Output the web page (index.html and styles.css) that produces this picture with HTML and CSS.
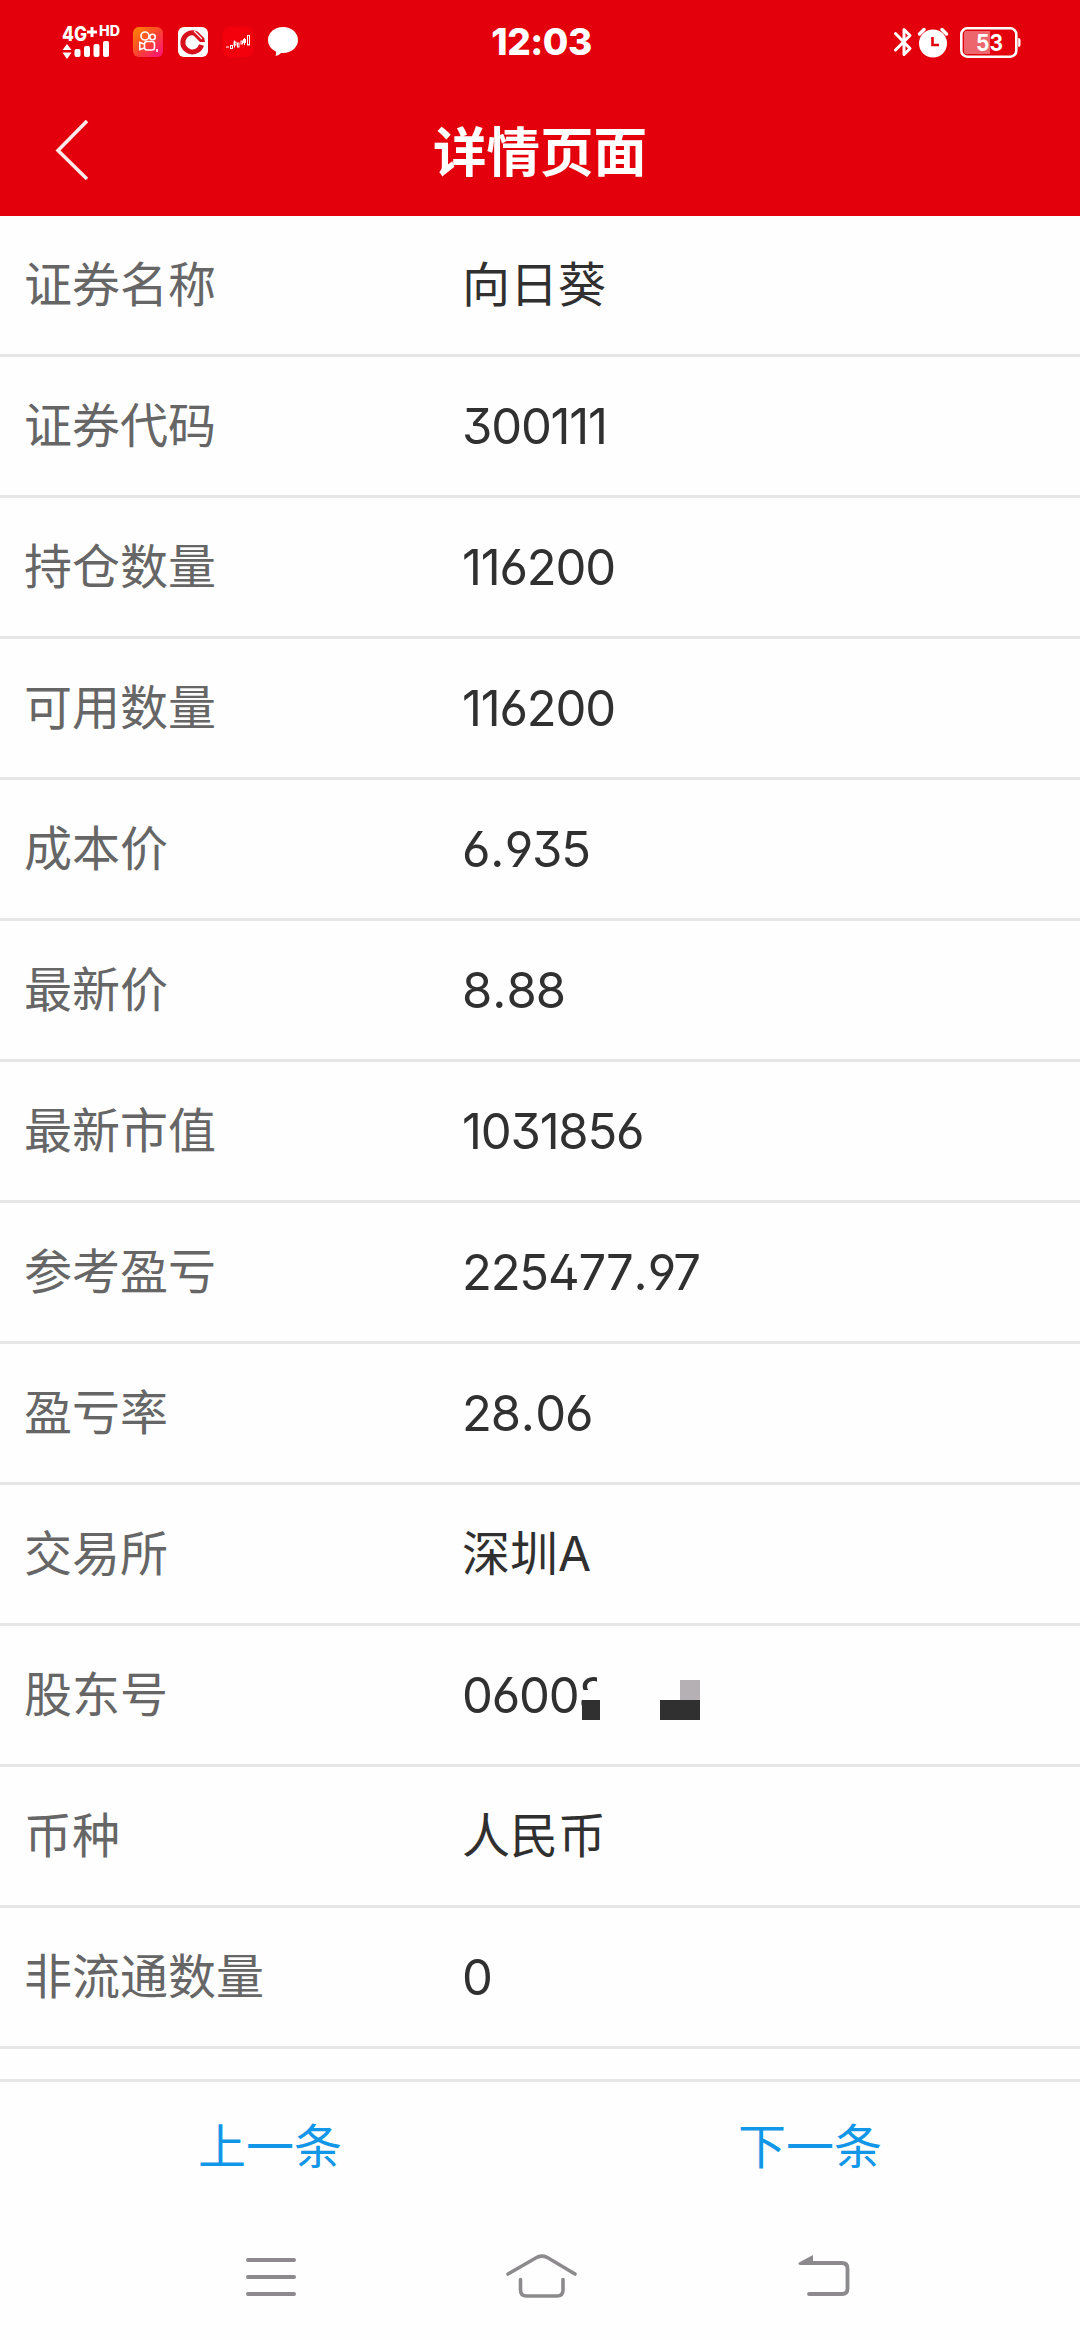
FILE: index.html
```html
<!DOCTYPE html>
<html lang="zh-CN">
<head>
<meta charset="utf-8">
<title>详情页面</title>
<link rel="stylesheet" href="styles.css">
</head>
<body>
<div class="screen">
  <header class="header">
    <div class="status">
      <div class="status-left">
        <svg class="signal" width="60" height="44" viewBox="0 -4 60 44">
          <g fill="#fff">
            <text class="net" x="0" y="17" textLength="25" lengthAdjust="spacingAndGlyphs">4G</text>
            <path d="M30 3v10M25 8h10" stroke="#fff" stroke-width="3"/>
            <text class="hd" x="37" y="12" textLength="21" lengthAdjust="spacingAndGlyphs">HD</text>
            <path d="M.5 26 5 20l4.500 6zM.5 28.500h9L5 35z"/>
            <rect x="12.500" y="25" width="6" height="8" rx="2"/>
            <rect x="22" y="22" width="6" height="11" rx="2"/>
            <rect x="31.500" y="20" width="6" height="13" rx="2"/>
            <rect x="41" y="17" width="6" height="16" rx="2"/>
          </g>
        </svg>
        <svg width="30" height="30" viewBox="0 0 30 30">
          <defs><linearGradient id="warm" x1="0" y1="0" x2="1" y2="1"><stop offset="0" stop-color="#ff8a00"/><stop offset=".5" stop-color="#ff4530"/><stop offset="1" stop-color="#ff1080"/></linearGradient></defs>
          <rect width="30" height="30" rx="6" fill="url(#warm)"/>
          <g fill="none" stroke="#fff" stroke-width="1.600"><circle cx="12" cy="9" r="4"/><circle cx="19.500" cy="10" r="2.800"/><rect x="11.500" y="14.500" width="10" height="8.500" rx="2.500"/><path d="M11 17l-4.200-1.500v7L11 21"/><path d="M24 22v3"/></g>
        </svg>
        <svg width="30" height="30" viewBox="0 0 30 30">
          <rect width="30" height="30" rx="6" fill="#fff"/>
          <path d="M16 6A9.500 9.500 0 1 0 23.500 18" fill="none" stroke="#d8101c" stroke-width="5"/>
          <path d="M16 3.500A12 12 0 0 1 27 15H22L14.500 7.500z" fill="#d8101c"/>
          <path d="M16 4l8 8M19 3l7 7" stroke="#fff" stroke-width="1.100"/>
          <path d="M15 9l6.200 6.200-6.200 6.200-6.200-6.200z" fill="#fff"/>
        </svg>
        <svg width="30" height="30" viewBox="0 0 30 30">
          <rect width="30" height="30" rx="6" fill="#f4000c"/>
          <g fill="none" stroke="#fff" stroke-width="1"><path d="M3 20h3M11.500 13.500v7M21.500 11v7"/><rect x="7.500" y="18.500" width="2" height="3"/><rect x="11" y="15" width="2" height="3"/><rect x="14.500" y="16" width="1.500" height="4"/><rect x="18" y="14" width="1.500" height="3"/><rect x="20.500" y="12.500" width="2" height="3"/><rect x="24.500" y="8.500" width="2" height="9.500"/></g>
        </svg>
        <svg width="30" height="30" viewBox="0 0 30 30"><path d="M15 0c8.500 0 15 5.800 15 13s-6.500 13-15 13l-2-.1Q10.500 28.800 7.500 29q1-2 .4-4.500C3 22.300 0 18 0 13 0 5.800 6.500 0 15 0z" fill="#fff"/></svg>
      </div>
      <div class="clock">12:03</div>
      <div class="status-right">
        <svg width="18" height="30" viewBox="0 0 18 30"><path d="M1.500 6.500 16 21.500 10 27.500V2.500L16 8.500 1.500 23" fill="none" stroke="#fff" stroke-width="3" stroke-linejoin="round" stroke-linecap="round"/></svg>
        <svg class="alarm" width="30" height="30" viewBox="0 0 30 30"><circle cx="15" cy="16.500" r="14" fill="#fff"/><path d="M1.500 7 6 2.500M28.500 7 24 2.500" stroke="#fff" stroke-width="3.500" stroke-linecap="round"/><path d="M14.500 10v8h6.500" fill="none" stroke="#e3000c" stroke-width="2.600"/></svg>
        <svg width="61" height="31" viewBox="0 0 61 31"><rect x="1.300" y="1.300" width="55" height="28.400" rx="6" fill="none" stroke="#fff" stroke-width="2.600"/><path d="M6 4H30V27H6Q4 27 4 25V6Q4 4 6 4z" fill="#fff" fill-opacity=".4"/><path d="M58.200 11q2.300 0 2.300 2v5q0 2-2.300 2z" fill="#fff"/><text class="level" x="16" y="23.500" textLength="27" lengthAdjust="spacingAndGlyphs">53</text></svg>
      </div>
    </div>
    <div class="titlebar">
      <svg class="back" width="34" height="62" viewBox="0 0 34 62"><path d="M32 2 3 31.500 32 60" fill="none" stroke="#fff" stroke-opacity=".92" stroke-width="3.500"/></svg>
      <h1 class="title">详情页面</h1>
    </div>
  </header>
  <main class="list">
    <div class="row"><span class="label">证券名称</span><span class="value">向日葵</span></div>
    <div class="row"><span class="label">证券代码</span><span class="value num">300111</span></div>
    <div class="row"><span class="label">持仓数量</span><span class="value num">116200</span></div>
    <div class="row"><span class="label">可用数量</span><span class="value num">116200</span></div>
    <div class="row"><span class="label">成本价</span><span class="value num">6<span class="dot">.</span>935</span></div>
    <div class="row"><span class="label">最新价</span><span class="value num">8<span class="dot">.</span>88</span></div>
    <div class="row"><span class="label">最新市值</span><span class="value num">1031856</span></div>
    <div class="row"><span class="label">参考盈亏</span><span class="value num">225477<span class="dot">.</span>97</span></div>
    <div class="row"><span class="label">盈亏率</span><span class="value num">28<span class="dot">.</span>06</span></div>
    <div class="row"><span class="label">交易所</span><span class="value">深圳A</span></div>
    <div class="row"><span class="label">股东号</span><span class="value num masked">06008<svg class="mosaic" width="120" height="50" viewBox="0 0 120 50"><path d="M17 0H120V50H2V20H17z" fill="#fefefe"/><path d="M2 30H20V50H2zM80 30h40v20H80z" fill="#303030"/><path d="M100 10h20v20h-20z" fill="#b5b0b4"/></svg></span></div>
    <div class="row"><span class="label">币种</span><span class="value">人民币</span></div>
    <div class="row"><span class="label">非流通数量</span><span class="value num">0</span></div>
  </main>
  <footer class="pager"><a class="page">上一条</a><a class="page">下一条</a></footer>
  <nav class="nav">
    <svg width="80" height="50" viewBox="0 0 80 50"><path d="M17 8h46M17 25h46M17 42h46" stroke="#8c8a8c" stroke-width="4" stroke-linecap="round"/></svg>
    <svg width="80" height="50" viewBox="0 0 80 50"><g fill="none" stroke="#8c8a8c" stroke-width="3.600" stroke-linecap="round"><path d="M7 22 36 5.300Q41 3 46 5.300L74 22"/><path d="M19.500 27.500V38Q19.500 44 25.500 44H56Q62 44 62 38V27.500"/></g></svg>
    <svg width="80" height="50" viewBox="0 0 80 50"><path d="M32 11H62Q67.500 11 67.500 16.500V36.500Q67.500 42 62 42H29" fill="none" stroke="#8c8a8c" stroke-width="3.800" stroke-linecap="round"/><path d="M33 3V13H20Q17.500 12 19 10.500z" fill="#8c8a8c"/></svg>
  </nav>
</div>
</body>
</html>
```
FILE: styles.css
```css
* { box-sizing: border-box; }
body { margin: 0; background: #fefefe; font-family: Inter, "Noto Sans CJK SC", sans-serif; }
.screen { width: 1080px; height: 2340px; display: flex; flex-direction: column; overflow: hidden; }
svg { display: block; flex: none; overflow: visible; }
.header { height: 216px; background: #e3000c; color: #fff; }
.status { height: 84px; padding: 0 59px 0 62px; display: grid; grid-template-columns: 1fr auto 1fr; align-items: center; }
.status-left { display: flex; gap: 15px; align-items: center; }
.signal { margin: 0 -4px 0 0; }
.status-right { display: flex; justify-content: flex-end; align-items: center; }
.alarm { margin: 0 12px 0 6px; }
.clock { font-size: 37px; font-weight: 800; line-height: 84px; letter-spacing: -.5px; }
.net { font: 800 20px/1 Inter, sans-serif; }
.hd { font: 800 14px/1 Inter, sans-serif; }
.level { font: 700 23px Inter, sans-serif; fill: #fff; }
.titlebar { height: 132px; padding: 0 55px; display: grid; grid-template-columns: 1fr auto 1fr; align-items: center; }
.title { margin: 6px 0 0; font-size: 53.5px; line-height: 80px; font-weight: 700; }
.list { height: 1863px; flex: none; }
.row { height: 141px; padding-left: 24px; border-bottom: 3px solid #e6e6e6; display: grid; grid-template-columns: 438px 1fr; align-items: center; font-size: 48px; line-height: 70px; }
.label { color: #666; }
.value { color: #303030; }
.num { padding-top: 2px; font-size: 49px; font-weight: 380; letter-spacing: -1.2px; font-feature-settings: "ss01" 1; }
.dot { padding: 0 1.500px 0 1px; }
.masked { position: relative; }
.mosaic { position: absolute; left: 118px; top: 11px; }
.pager { height: 138px; flex: none; padding-bottom: 5px; border-top: 3px solid #e6e6e6; display: grid; grid-template-columns: 1fr 1fr; align-items: center; text-align: center; color: #1296e8; font-size: 48px; line-height: 70px; }
.nav { flex: 1; padding: 35px 220px 0 231px; display: grid; grid-template-columns: 270px 1fr 80px; }
```
